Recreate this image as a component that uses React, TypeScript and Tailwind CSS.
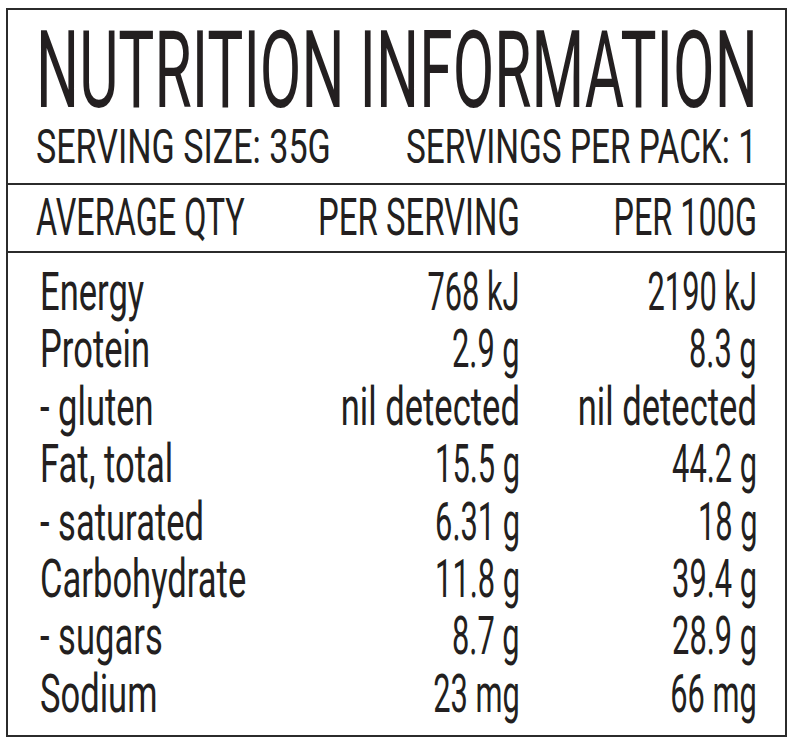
import React from "react";

type Row = { label: string; serving: string; per100: string };

const rows: Row[] = [
  { label: "Energy", serving: "768 kJ", per100: "2190 kJ" },
  { label: "Protein", serving: "2.9 g", per100: "8.3 g" },
  { label: "- gluten", serving: "nil detected", per100: "nil detected" },
  { label: "Fat, total", serving: "15.5 g", per100: "44.2 g" },
  { label: "- saturated", serving: "6.31 g", per100: "18 g" },
  { label: "Carbohydrate", serving: "11.8 g", per100: "39.4 g" },
  { label: "- sugars", serving: "8.7 g", per100: "28.9 g" },
  { label: "Sodium", serving: "23 mg", per100: "66 mg" },
];

// the label font is a narrow condensed face, so Roboto gets squeezed horizontally
const Value = ({ text }: { text: string }) => (
  <div className="flex min-w-0 justify-end">
    <span
      className={
        text === "nil detected"
          ? "inline-block shrink-0 whitespace-nowrap origin-right scale-x-[0.64]"
          : "inline-block shrink-0 whitespace-nowrap origin-right scale-x-[0.57]"
      }
    >
      {text}
    </span>
  </div>
);

const App = () => {
  return (
    <div className="min-h-screen bg-white pt-[8px] pl-[6px] font-[Roboto,sans-serif] text-[#231f20]">
      <div className="flex h-[729px] w-[781px] flex-col overflow-hidden border-2 border-[#2b2b2b]">
        <div className="border-b-2 border-[#2b2b2b] px-[28px] pt-[10px] pb-[12px]">
          <h1 className="text-[108px] leading-[100px] font-normal">
            <span className="inline-block whitespace-nowrap origin-left scale-x-[0.56]">
              NUTRITION INFORMATION
            </span>
          </h1>
          <div className="mt-[3px] grid grid-cols-2 text-[48px] leading-[48px]">
            <div className="min-w-0">
              <span className="inline-block whitespace-nowrap origin-left scale-x-[0.71]">
                SERVING SIZE: 35G
              </span>
            </div>
            <div className="flex min-w-0 justify-end">
              <span className="inline-block shrink-0 whitespace-nowrap origin-right scale-x-[0.695]">
                SERVINGS PER PACK: 1
              </span>
            </div>
          </div>
        </div>

        <div className="grid grid-cols-[minmax(0,1fr)_237px_237px] border-b-2 border-[#2b2b2b] px-[28px] pt-[7px] pb-[8px] text-[51px] leading-[51px]">
          <div className="min-w-0">
            <span className="inline-block whitespace-nowrap origin-left scale-x-[0.635]">
              AVERAGE QTY
            </span>
          </div>
          <div className="flex min-w-0 justify-end">
            <span className="inline-block shrink-0 whitespace-nowrap origin-right scale-x-[0.645]">
              PER SERVING
            </span>
          </div>
          <div className="flex min-w-0 justify-end">
            <span className="inline-block shrink-0 whitespace-nowrap origin-right scale-x-[0.635]">
              PER 100G
            </span>
          </div>
        </div>

        <div className="flex-1 px-[28px] pt-[10px] text-[54px] leading-[57.4px]">
          {rows.map((r) => (
            <div key={r.label} className="grid grid-cols-[minmax(0,1fr)_237px_237px]">
              <div className="min-w-0 pl-[4px]">
                <span className="inline-block whitespace-nowrap origin-left scale-x-[0.64]">
                  {r.label}
                </span>
              </div>
              <Value text={r.serving} />
              <Value text={r.per100} />
            </div>
          ))}
        </div>
      </div>
    </div>
  );
};

export default App;
